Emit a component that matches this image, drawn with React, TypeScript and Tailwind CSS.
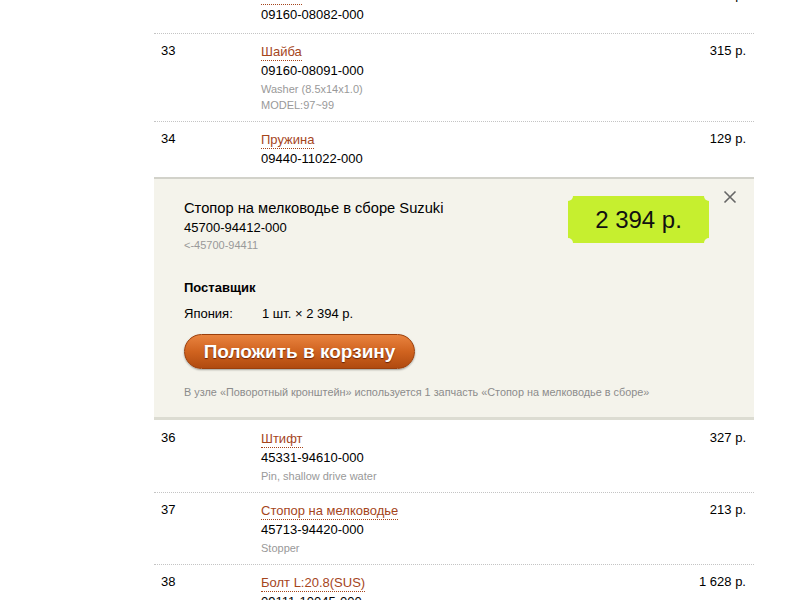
import React from "react";

type Row = {
  num: string;
  name: string;
  part: string;
  price: string;
  desc?: string[];
};

const font = { fontFamily: '"Liberation Sans", Arial, sans-serif' };

function PartRow({ row, first, plain }: { row: Row; first?: boolean; plain?: boolean }) {
  return (
    <div
      className={
        "flex pt-[7px] pb-[8px] " +
        (first
          ? "mt-[-23px] border-t border-transparent"
          : plain
          ? "border-t border-transparent"
          : "border-t border-dotted border-[#c4c4c4]")
      }
    >
      <div className="w-[107px] pl-[7px] text-[13px] leading-[20px] text-black">{row.num}</div>
      <div className="flex-1 flex flex-col">
        <div className="h-[20px] leading-[20px]">
          <span className="text-[13px] text-[#a5451c] border-b border-dotted border-[#a5451c] leading-[16px] inline-block">
            {row.name}
          </span>
        </div>
        <div className="text-[13px] leading-[20px] text-black">{row.part}</div>
        {row.desc?.map((d) => (
          <div key={d} className="text-[11px] leading-[16px] text-[#999999]">
            {d}
          </div>
        ))}
      </div>
      <div className="pr-[8px] text-[13px] leading-[20px] text-black text-right">{row.price}</div>
    </div>
  );
}

function PriceBadge() {
  return (
    <div className="relative w-[141px] h-[47px] bg-[#c6ef2f] flex items-center justify-center overflow-hidden">
      <span className="text-[24px] text-[#111] leading-none">2 394 р.</span>
      <span className="absolute -left-[5px] -top-[5px] w-[10px] h-[10px] rounded-full bg-[#f4f3eb]" />
      <span className="absolute -right-[5px] -top-[5px] w-[10px] h-[10px] rounded-full bg-[#f4f3eb]" />
      <span className="absolute -left-[5px] -bottom-[5px] w-[10px] h-[10px] rounded-full bg-[#f4f3eb]" />
      <span className="absolute -right-[5px] -bottom-[5px] w-[10px] h-[10px] rounded-full bg-[#f4f3eb]" />
    </div>
  );
}

function DetailPanel() {
  return (
    <div className="relative bg-[#f4f3eb] border-t-2 border-[#d2d2ca] border-b-[3px] border-b-[#dcdcd2] pl-[30px] pt-[20px] pb-[18px]">
      <div className="flex">
        <div className="flex-1">
          <div className="text-[14.7px] leading-[18px] text-black">Стопор на мелководье в сборе Suzuki</div>
          <div className="text-[13px] leading-[20px] mt-[1px] text-black">45700-94412-000</div>
          <div className="text-[11px] leading-[14px] text-[#999999]">&lt;-45700-94411</div>
        </div>
        <div className="mt-[-3px] mr-[45px]">
          <PriceBadge />
        </div>
      </div>
      <button className="absolute right-[17px] top-[11px] w-[14px] h-[14px] flex items-center justify-center">
        <svg width="14" height="14" viewBox="0 0 14 14">
          <path d="M1.5 1.5 L12.5 12.5 M12.5 1.5 L1.5 12.5" stroke="#666" strokeWidth="1.6" />
        </svg>
      </button>
      <div className="mt-[27px] text-[13px] leading-[18px] font-bold text-black">Поставщик</div>
      <div className="mt-[8px] flex text-[13px] leading-[18px] text-black">
        <div className="w-[78px]">Япония:</div>
        <div>1 шт. × 2 394 р.</div>
      </div>
      <div className="mt-[11px]">
        <button className="h-[35px] w-[231px] rounded-full border border-[#9b3f0c] bg-gradient-to-b from-[#e9833e] via-[#d0631f] to-[#b04a10] shadow-[0_1px_2px_rgba(0,0,0,0.35)] text-white font-bold text-[19px] leading-none [text-shadow:0_1px_1px_rgba(80,20,0,0.8)]">
          Положить в корзину
        </button>
      </div>
      <div className="mt-[16px] text-[10.85px] leading-[14px] text-[#8c8c8c]">
        В узле «Поворотный кронштейн» используется 1 запчасть «Стопор на мелководье в сборе»
      </div>
    </div>
  );
}

const before: Row[] = [
  { num: "", name: "Шайба", part: "09160-08082-000", price: "315 р." },
  {
    num: "33",
    name: "Шайба",
    part: "09160-08091-000",
    price: "315 р.",
    desc: ["Washer (8.5x14x1.0)", "MODEL:97~99"],
  },
  { num: "34", name: "Пружина", part: "09440-11022-000", price: "129 р." },
];

const after: Row[] = [
  { num: "36", name: "Штифт", part: "45331-94610-000", price: "327 р.", desc: ["Pin, shallow drive water"] },
  { num: "37", name: "Стопор на мелководье", part: "45713-94420-000", price: "213 р.", desc: ["Stopper"] },
  { num: "38", name: "Болт L:20.8(SUS)", part: "09111-10045-000", price: "1 628 р." },
];

export default function App() {
  return (
    <div className="w-[800px] h-[600px] overflow-hidden bg-white" style={font}>
      <div className="ml-[154px] w-[600px]">
        {before.map((r, i) => (
          <PartRow key={i} row={r} first={i === 0} />
        ))}
        <DetailPanel />
        {after.map((r, i) => (
          <PartRow key={i} row={r} plain={i === 0} />
        ))}
      </div>
    </div>
  );
}
